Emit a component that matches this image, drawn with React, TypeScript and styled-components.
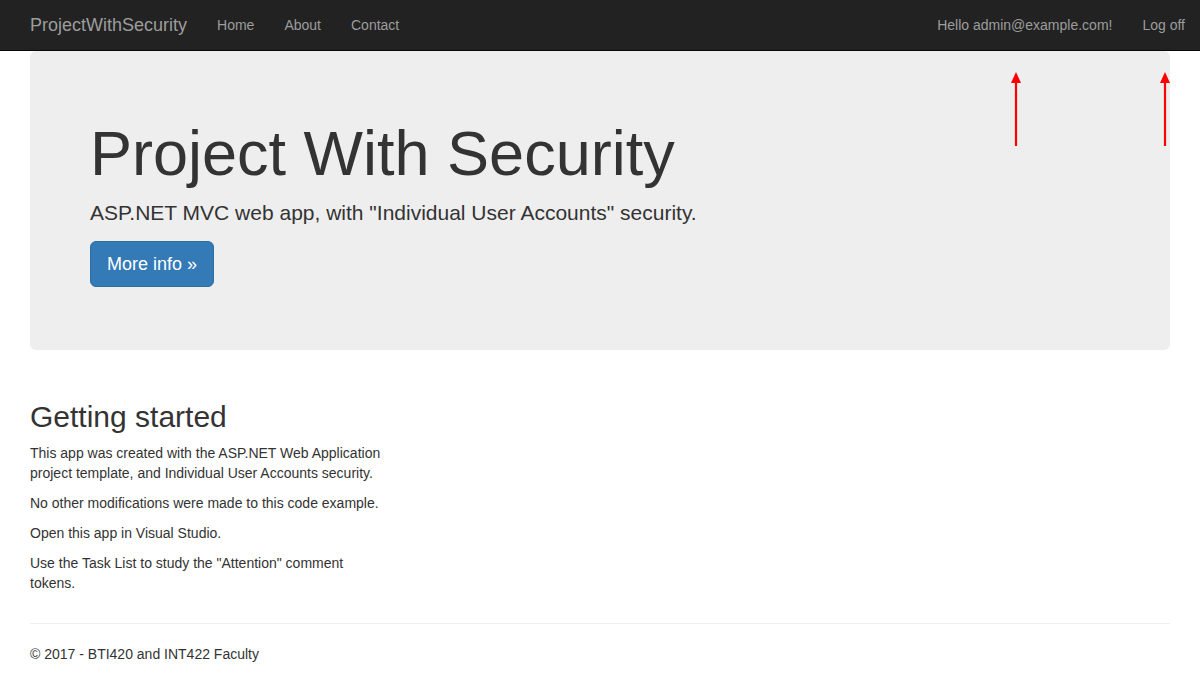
import React from "react";
import styled, { createGlobalStyle } from "styled-components";

const GlobalStyle = createGlobalStyle`
  * { box-sizing: border-box; }
  html, body { margin: 0; padding: 0; }
  body {
    font-family: "Liberation Sans", Arial, Helvetica, sans-serif;
    font-size: 14px;
    line-height: 1.42857143;
    color: #333;
    background: #fff;
  }
`;

const Navbar = styled.nav`
  height: 51px;
  background: #222;
  border-bottom: 1px solid #080808;
  display: flex;
  align-items: stretch;
  padding-left: 15px;
`;

const Brand = styled.a`
  display: flex;
  align-items: center;
  padding: 0 15px;
  font-size: 18px;
  line-height: 20px;
  color: #9d9d9d;
  text-decoration: none;
  height: 50px;
`;

const NavList = styled.div<{ $right?: boolean }>`
  display: flex;
  margin-left: ${(p) => (p.$right ? "auto" : "0")};
`;

const NavLink = styled.a`
  display: flex;
  align-items: center;
  height: 50px;
  padding: 0 15px;
  color: #9d9d9d;
  text-decoration: none;
  font-size: 14px;
  line-height: 20px;
`;

const Container = styled.div`
  width: 1170px;
  margin: 0 auto;
  padding: 0 15px;
  position: relative;
`;

const Jumbotron = styled.div`
  background: #eee;
  border-radius: 6px;
  padding: 48px 60px;
  margin-bottom: 30px;
`;

const Title = styled.h1`
  font-size: 63px;
  line-height: 1.1;
  font-weight: 500;
  margin: 20px 0 10px;
  color: #333;
`;

const Lead = styled.p`
  font-size: 21px;
  font-weight: 200;
  line-height: 1.42857143;
  margin: 0 0 13px;
`;

const ButtonRow = styled.p`
  margin: 0 0 15px;
  font-size: 21px;
  line-height: 1.42857143;
`;

const PrimaryButton = styled.a`
  display: inline-block;
  padding: 10px 16px;
  font-size: 18px;
  line-height: 1.3333333;
  border-radius: 6px;
  background: #337ab7;
  border: 1px solid #2e6da4;
  color: #fff;
  text-decoration: none;
  vertical-align: middle;
`;

const Row = styled.div`
  display: grid;
  grid-template-columns: repeat(3, 1fr);
  margin: 0 -15px;
`;

const Column = styled.div`
  padding: 0 15px;
`;

const SectionTitle = styled.h2`
  font-size: 30px;
  line-height: 1.1;
  font-weight: 500;
  margin: 20px 0 10px;
`;

const Para = styled.p`
  margin: 0 0 10px;
`;

const Divider = styled.hr`
  margin: 20px 0;
  border: 0;
  border-top: 1px solid #eee;
`;

const Footer = styled.footer`
  p {
    margin: 0 0 10px;
  }
`;

const Annotation = styled.svg<{ $left: number }>`
  position: absolute;
  top: 21px;
  left: ${(p) => p.$left}px;
  width: 12px;
  height: 74px;
  overflow: visible;
`;

const Arrow: React.FC<{ left: number }> = ({ left }) => (
  <Annotation $left={left} viewBox="0 0 12 74">
    <line x1="6" y1="8" x2="6" y2="74" stroke="#ff0000" strokeWidth="2.2" />
    <polygon points="6,0 1,11 11,11" fill="#ff0000" />
  </Annotation>
);

export default function App() {
  return (
    <>
      <GlobalStyle />
      <Navbar>
        <Brand href="#">ProjectWithSecurity</Brand>
        <NavList>
          <NavLink href="#">Home</NavLink>
          <NavLink href="#">About</NavLink>
          <NavLink href="#">Contact</NavLink>
        </NavList>
        <NavList $right>
          <NavLink href="#">Hello admin@example.com!</NavLink>
          <NavLink href="#">Log off</NavLink>
        </NavList>
      </Navbar>
      <Container>
        <Arrow left={995} />
        <Arrow left={1144} />
        <Jumbotron>
          <Title>Project With Security</Title>
          <Lead>ASP.NET MVC web app, with "Individual User Accounts" security.</Lead>
          <ButtonRow>
            <PrimaryButton href="#">More info »</PrimaryButton>
          </ButtonRow>
        </Jumbotron>
        <Row>
          <Column>
            <SectionTitle>Getting started</SectionTitle>
            <Para>
              This app was created with the ASP.NET Web Application project template, and
              Individual User Accounts security.
            </Para>
            <Para>No other modifications were made to this code example.</Para>
            <Para>Open this app in Visual Studio.</Para>
            <Para>Use the Task List to study the "Attention" comment tokens.</Para>
          </Column>
        </Row>
        <Divider />
        <Footer>
          <p>© 2017 - BTI420 and INT422 Faculty</p>
        </Footer>
      </Container>
    </>
  );
}
